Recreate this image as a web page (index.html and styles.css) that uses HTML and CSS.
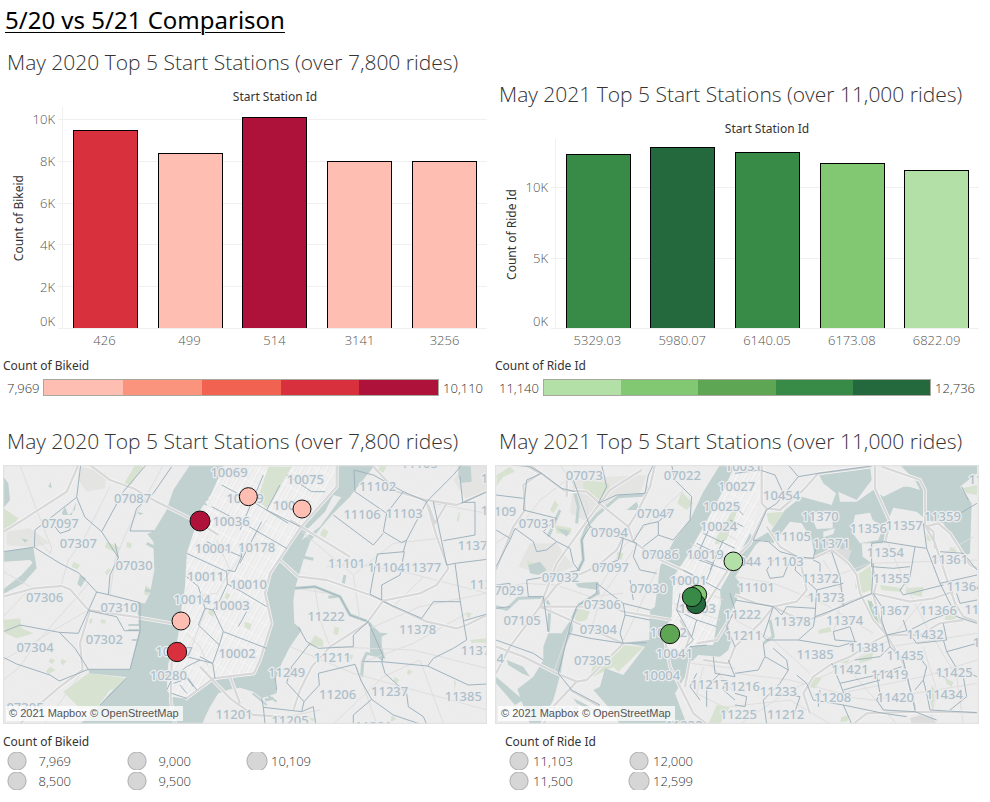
FILE: index.html
```html
<!DOCTYPE html>
<html lang="en">
<head>
<meta charset="utf-8">
<title>5/20 vs 5/21 Comparison</title>
<link rel="stylesheet" href="styles.css">
</head>
<body>
<main class="dashboard">
<h1 class="page-title">5/20 vs 5/21 Comparison</h1>

<section class="sheet sheet-bars red">
  <h2 class="sheet-title">May 2020 Top 5 Start Stations (over 7,800 rides)</h2>
  <div class="chart">
    <p class="column-title">Start Station Id</p>
    <p class="axis-title"><span>Count of Bikeid</span></p>
    <div class="scale scale-bike">
      <span class="tick">10K</span><span class="tick">8K</span><span class="tick">6K</span><span class="tick">4K</span>
      <span class="tick tick-last"><span>2K</span><span>0K</span></span>
    </div>
    <div class="plot">
      <div class="lines scale-bike"><i></i><i></i><i></i><i></i><i></i></div>
      <div class="bars bars-bike">
        <div class="slot"><div class="bar c4" style="height:89.6%"></div></div>
        <div class="slot"><div class="bar c1" style="height:79.2%"></div></div>
        <div class="slot"><div class="bar c5" style="height:95.5%"></div></div>
        <div class="slot"><div class="bar c1" style="height:75.6%"></div></div>
        <div class="slot"><div class="bar c1" style="height:75.6%"></div></div>
      </div>
    </div>
    <div class="names"><span>426</span><span>499</span><span>514</span><span>3141</span><span>3256</span></div>
  </div>
</section>

<section class="sheet sheet-bars green">
  <h2 class="sheet-title">May 2021 Top 5 Start Stations (over 11,000 rides)</h2>
  <div class="chart chart-ride">
    <p class="column-title">Start Station Id</p>
    <p class="axis-title"><span>Count of Ride Id</span></p>
    <div class="scale scale-ride">
      <span class="tick">10K</span>
      <span class="tick tick-last"><span>5K</span><span>0K</span></span>
    </div>
    <div class="plot">
      <div class="lines scale-ride"><i></i><i></i></div>
      <div class="bars bars-ride">
        <div class="slot"><div class="bar c4" style="height:92.1%"></div></div>
        <div class="slot"><div class="bar c5" style="height:95.8%"></div></div>
        <div class="slot"><div class="bar c4" style="height:93.1%"></div></div>
        <div class="slot"><div class="bar c2" style="height:87.3%"></div></div>
        <div class="slot"><div class="bar c1" style="height:83.6%"></div></div>
      </div>
    </div>
    <div class="names"><span>5329.03</span><span>5980.07</span><span>6140.05</span><span>6173.08</span><span>6822.09</span></div>
  </div>
</section>

<section class="ramp-legend red">
  <h3 class="legend-title">Count of Bikeid</h3>
  <div class="ramp"><span>7,969</span><div class="ramp-bar"><i class="c1"></i><i class="c2"></i><i class="c3"></i><i class="c4"></i><i class="c5"></i></div><span>10,110</span></div>
</section>
<section class="ramp-legend green">
  <h3 class="legend-title">Count of Ride Id</h3>
  <div class="ramp"><span>11,140</span><div class="ramp-bar"><i class="c1"></i><i class="c2"></i><i class="c3"></i><i class="c4"></i><i class="c5"></i></div><span>12,736</span></div>
</section>

<section class="sheet">
  <h2 class="sheet-title">May 2020 Top 5 Start Stations (over 7,800 rides)</h2>
  <div class="map">
  <svg viewBox="9 15 1452 777" role="img" aria-label="Map of 2020 start stations">
    <defs>
      <pattern id="grid-a" width="22" height="44" patternUnits="userSpaceOnUse" patternTransform="rotate(29)"><path d="M0 0V44M0 0H22M11 0V44" class="street"/></pattern>
      <pattern id="grid-b" width="46" height="15" patternUnits="userSpaceOnUse" patternTransform="rotate(-62)"><path d="M0 0V15M0 0H46" class="street faint"/></pattern>
      <g id="roads-a">
        <path d="M235 15L200 95L130 140L60 185L10 215M270 15L330 60L400 85L470 125L600 190L655 225M10 410L100 385L185 378L210 388L265 450L400 470L545 495M270 450L240 550L248 630L180 680L110 740L60 792M515 600L512 720L525 792M600 620L690 715L760 765L850 770M690 650L720 730"/>
        <path d="M1010 15L1010 80L900 205L810 340L795 400L815 490L780 600L762 640L640 655L555 718"/>
        <path d="M840 300L895 350L980 360L1110 405L1150 422L1180 440L1280 485L1370 505L1400 495L1461 465M1340 130L1305 190L1285 135M1278 120L1310 230L1345 325L1310 375L1260 400L1150 422L1100 490L990 560L935 620L900 690L880 750M1120 20L1190 95L1280 120L1370 135L1461 95M870 180L1050 290"/>
      </g>
    </defs>
    <rect class="land" x="9" y="15" width="1452" height="777"/>
    <rect fill="url(#grid-b)" x="9" y="15" width="1452" height="777"/>
    <path class="shade" d="M245 20L320 40L315 85L260 95L235 60ZM20 215L90 205L150 250L100 262L20 255Z"/>
    <path class="shade" d="M1395 15H1461V95L1400 120L1360 60Z"/>
    <path class="land" d="M670 15H1020L800 360L815 500L760 650L560 720L505 690L545 440L570 240Z"/>
    <path fill="url(#grid-a)" d="M670 15H1020L800 360L815 500L760 650L560 720L505 690L545 440L570 240Z"/>
    <g class="park">
      <path d="M10 145L55 175L35 205L10 208ZM10 480L60 475L65 505L100 520L50 535L15 520ZM190 695L265 640L382 655L380 680L330 690L290 745H240ZM405 15L430 20L385 85L370 75ZM320 245L358 262L350 280L315 262ZM220 305L240 315L232 328L215 320ZM325 325L333 330L320 345L315 338ZM380 245L395 250L393 265L380 262ZM437 375L450 385L445 408L432 402ZM270 475L278 478L274 492L266 488ZM303 478L317 480L316 491L302 489ZM150 595L165 600L158 612L146 606ZM185 597L200 603L190 615L182 610ZM150 620L167 630L145 642L138 634ZM680 398L692 405L682 420L675 412ZM630 445L645 455L638 470L624 460ZM590 775L620 742L610 792H590Z"/>
      <path d="M805 20L875 20L820 115L800 145L770 120L785 80ZM970 205L985 215L975 235L960 225ZM900 250L920 265L895 280ZM735 485L755 492L750 510L733 502ZM1004 500L1018 503L1014 525L1000 522ZM945 525L968 540L970 560L925 558ZM1040 582L1060 585L1055 598L1035 595ZM1185 650L1198 660L1190 670L1180 662ZM1225 628L1237 635L1227 645L1220 640ZM1140 15L1160 20L1150 38L1135 30ZM1375 160L1380 155L1376 185L1370 182ZM1400 455L1415 460L1408 475L1400 470ZM1410 540L1461 535V548H1415ZM1175 765L1190 778L1172 785ZM925 772L945 776L938 785ZM1362 660L1368 665L1364 690Z"/>
    </g>
    <g class="water">
      <path d="M570 15L520 90L500 150L462 213L442 222L460 245L463 330L450 400L435 430L410 428L418 512L408 550L390 628L265 628L268 640L384 652L330 700L300 735L240 792H605L630 740L655 700L690 688L720 683L760 695L785 715L830 700L825 660L845 610L870 560L905 510L883 490L880 425L885 385L895 350L910 300L930 245L965 200L1000 160L1050 110L1065 90L1125 15H1015L1005 80L970 130L900 210L840 300L805 360L795 420L815 485L800 540L785 600L765 640L720 648L650 655L600 690L555 716L515 710L500 690L505 610L530 550L537 510L545 440L555 380L560 280L580 220L600 150L635 100L672 15Z"/>
      <path d="M10 275L100 262L110 325L70 370L10 402V388L65 345L98 308L90 300L10 305ZM10 50L25 70L30 120L10 145ZM145 80L152 66L155 85ZM240 345L258 355L243 382L232 372ZM410 155L430 160L420 165ZM185 160L195 140L205 165L225 150L228 125L215 165L190 165ZM64 235L85 240L75 248ZM1375 15L1412 15L1415 65L1385 68L1375 50ZM1110 490L1140 518L1165 520L1145 530L1145 565L1150 605L1110 575Z"/>
      <path class="creek" d="M885 385L945 380L1020 410L1050 465L1105 485L1130 525L1150 590L1100 580L1088 605L1085 650M1015 408L985 412M1030 370L1035 345M905 290L940 298M790 700L830 690M795 720L820 715M440 250L470 265M435 390L460 395"/>
    </g>
    <path class="piers" d="M385 495H418M385 510H418M395 540H412M620 80L635 90M615 95L632 105M610 110L625 120M605 125L620 135M545 290L560 294M542 305L558 309M542 320L558 324M765 665L810 700M758 700L800 735M780 690L830 725"/>
    <path class="land" d="M1000 105L1024 112L960 200L905 240L925 205L975 155Z"/>
    <path class="minor" d="M490 15L380 215L345 300L330 405M185 370L205 300L250 240L330 80M10 470L90 385M10 335L100 385M60 15L110 150L155 265L150 280L115 240M10 660L60 620L100 560L270 365M10 600L180 500L265 450M135 790L250 630M560 520L600 560L625 620M620 440L575 560M650 240L690 330L650 400L575 410M800 180L680 350M900 210L1060 345L1080 480M980 320L1060 310L1230 340L1461 400M1060 345L1180 250L1320 235M1110 505L1260 440L1461 400M1300 130L1461 160M945 385L960 480L990 560M1180 440L1270 350M985 560L1240 570L1461 625M1080 610L1240 550L1400 460M885 385L985 400M870 560L1060 640L1461 750M1000 792L1150 650L1260 600L1330 790M1070 620L1130 792M720 765L860 770L960 750"/>
    <use href="#roads-a" class="casing"/><use href="#roads-a" class="major"/>
    <path class="zip" d="M242 15L230 112L105 210L103 262L180 310L235 338L290 396L325 404L330 345L355 293L305 215L255 172L230 112M438 15L370 95L305 215M515 20L460 100L410 145L390 213H462M325 404L420 428V515L390 628H265L178 663L150 645L50 612L10 592M290 396L265 452L235 520L178 517L60 495L10 515M265 452L350 470L373 512H418M178 517L225 565L265 628M355 293L345 250M100 262L10 275M165 200L180 220L210 210V190M382 652L300 735"/>
    <path class="zip" d="M665 75L750 120L865 190M635 140L730 190L860 265M620 245L725 290L705 335L680 330M560 280L680 335L682 372L660 420L640 450L615 445L595 380L560 350M682 372L725 395L800 440M615 445L595 495L658 555L638 610L600 590M640 450L670 515L658 555M670 515L800 565M540 545L560 590L638 610L645 655M520 670L565 655L590 690M540 675L560 700M500 690L520 650L560 620L600 600M790 45L720 210M840 75L800 150L900 200M725 290L720 255M860 45L935 95H975M785 185L720 310M715 500L740 455M515 700L560 715M550 640L580 680"/>
    <path class="zip" d="M1065 95L1062 30L1120 45L1210 95L1280 125L1220 240L1205 248L1150 215L1160 160L1065 95M1210 95L1160 160M1000 165L1120 255L1150 220M1210 275L1220 240M1110 402L1132 282L1213 275L1200 345L1145 375V420L1110 402M1280 125L1360 45L1385 15M1300 125L1340 315L1365 310L1380 420L1400 540L1360 565L1300 595L1283 618M1385 130L1461 95M1388 125L1380 50M1385 127H1425V225L1330 242M1365 310L1461 298M1150 425L1265 475L1300 425H1380M1393 482L1461 462M885 385L945 380L1020 410L1050 465L1105 485L1060 525V560L955 565L920 545L895 500M1105 485L1150 590L1145 605L1088 605M1145 605L1283 618L1405 675L1461 672M1145 605L1155 640L1220 700L1225 740L1270 770L1280 792M955 640L1065 613L1082 660L1115 718L1060 765V792M955 640L958 675L912 725L860 668L875 620L930 550M1115 718L1180 765L1260 792M912 725L905 755L790 742L785 715M905 755L940 740L947 792M790 742L795 792M830 690L825 650"/>
    <g class="zip-labels">
      <text x="398" y="115">07087</text><text x="687" y="35">10069</text><text x="735" y="115">10019</text><text x="693" y="183">10036</text><text x="180" y="188">07097</text><text x="235" y="248">07307</text><text x="640" y="265">10001</text><text x="402" y="315">07030</text><text x="617" y="348">10011</text><text x="134" y="410">07306</text><text x="576" y="416">10014</text><text x="693" y="436">10003</text><text x="357" y="440">07310</text><text x="313" y="537">07302</text><text x="105" y="560">07304</text><text x="522" y="572">10007</text><text x="711" y="580">10002</text><text x="505" y="645">10280</text><text x="75" y="740">07305</text><text x="702" y="762">11201</text>
      <text x="916" y="57">10075</text><text x="1133" y="77">11102</text><text x="1086" y="163">11106</text><text x="1212" y="158">11103</text><text x="875" y="135">10065</text><text x="770" y="262">10178</text><text x="1040" y="308">11101</text><text x="1158" y="320">11104</text><text x="1268" y="320">11377</text><text x="1429" y="255">11372</text><text x="1465" y="372">11373</text><text x="745" y="371">10010</text><text x="978" y="467">11222</text><text x="1253" y="507">11378</text><text x="997" y="592">11211</text><text x="1438" y="570">11379</text><text x="860" y="636">11249</text><text x="1013" y="702">11206</text><text x="1169" y="693">11237</text><text x="1390" y="708">11385</text><text x="870" y="779">11205</text><text x="1120" y="797">11221</text><text x="1258" y="9">11105</text><text x="1498" y="55">11370</text><text x="1498" y="150">11369</text>
    </g>
    <g class="mark red"><circle class="c1" cx="745" cy="110" r="27"/><circle class="c1" cx="906" cy="147" r="27"/><circle class="c5" cx="600" cy="183" r="30"/><circle class="c1" cx="543" cy="483" r="27"/><circle class="c4" cx="531" cy="576" r="29"/></g>
    <rect class="frame" x="11" y="17" width="1448" height="773"/>
  </svg>
  <p class="credit">© 2021 Mapbox © OpenStreetMap</p>
  </div>
</section>

<section class="sheet">
  <h2 class="sheet-title">May 2021 Top 5 Start Stations (over 11,000 rides)</h2>
  <div class="map">
  <svg viewBox="15 15 1452 777" role="img" aria-label="Map of 2021 start stations">
    <defs>
      <g id="roads-b">
        <path d="M120 15L220 90L290 95L340 140L415 200L430 245L510 300L610 345M105 15L150 40L100 75L105 150L70 200L18 330M495 15L480 80L440 160L415 200L380 270L320 320L200 375L150 440L60 560L18 640M455 30L360 90L300 170L200 310L150 440M18 560L100 590L200 640L260 665L290 660L370 580L400 550M150 440L240 480L400 550M260 665L190 740L160 792M230 60V110M150 440H280L340 430L400 455L545 480M240 690L330 740M525 540L540 620L580 700L610 760L650 792M580 580L600 530L570 480M600 600L585 680M620 550L680 540L735 450"/>
        <path d="M815 15V130L830 145L780 250L740 290L650 430M830 145L870 150L940 90L985 40L1140 20M830 200L870 260L930 295L970 295L1025 270L1075 310L1100 345L1110 400L1150 480L1190 525M930 300L950 390L920 425L850 440L800 430L735 405M850 440L810 490L735 560L715 610L640 600M850 440L940 485L1000 465L1080 425L1150 400L1260 425L1330 415L1390 395M1155 15V85L1200 185L1185 250M1175 20L1290 60L1305 90V195L1335 250L1395 430L1420 470L1461 485M1305 200L1345 190L1380 220L1440 315L1461 325M1305 195L1330 215L1335 265M1145 310L1160 370L1150 405L1170 480L1190 525L1160 540L1080 590L1020 615L970 650L940 700L960 760M1190 525L1240 610L1275 740V760M1190 525L1290 525L1350 490L1420 480M1090 792L1130 760L1275 755L1461 758"/>
      </g>
    </defs>
    <rect class="land" x="15" y="15" width="1452" height="777"/>
    <rect fill="url(#grid-b)" x="15" y="15" width="1452" height="777"/>
    <path fill="url(#grid-a)" d="M735 15H830L780 240L690 390L670 555L530 580L545 350Z"/>
    <path class="shade" d="M250 60L350 50L470 45L450 100L370 110L300 190L240 160ZM85 320L120 250L200 250L250 320L180 350Z"/>
    <g class="park">
      <path d="M60 20L75 35L40 50L20 78V45ZM280 60L355 70L360 90L325 120L280 90ZM195 195L245 205L240 225L200 220ZM180 150L195 120L205 135L190 160ZM575 95L608 130L590 150L562 130ZM735 140L750 130L710 240L675 255L680 230ZM265 445L300 455L290 480L250 490ZM370 580L400 555L460 562L385 635L370 620L330 640L300 655L310 610L350 615ZM180 670L200 680L190 705L175 695ZM680 735L720 740L690 792H655ZM110 300L130 310L115 320ZM380 275L400 280L395 300L382 295Z"/>
      <path d="M990 55L1040 70L1080 90L1060 95L1010 75ZM1160 60L1200 40L1190 80L1150 110ZM1100 345L1145 315V390L1115 400L1095 380ZM1170 375L1240 385L1230 395L1175 390ZM1250 385L1300 380L1295 410L1245 400ZM985 510L1020 500L1025 515L985 522ZM1105 595L1150 575L1145 600L1110 610ZM955 680L975 650L995 655L975 685ZM1050 600L1080 598L1070 610L1048 608ZM1310 200L1325 210L1322 245L1310 240ZM1365 450L1400 460L1395 485L1365 480ZM1365 655L1390 665L1385 680L1370 672ZM1325 675L1335 690L1328 750L1320 720ZM1415 85L1461 75V105L1430 100ZM1380 260L1400 270L1395 280L1378 272ZM830 160L880 155L850 200L835 185ZM1055 770L1080 765L1070 785L1050 785Z"/>
    </g>
    <g class="water">
      <path d="M690 15L640 95L600 180L550 245L510 320L495 440L480 450L478 540L400 548L465 560L400 645L345 625L330 680L310 690L350 735L390 792H590L570 740L555 700L585 650L600 610L625 585L690 590L715 570L725 540L710 480L740 420L760 380L735 350L800 250L780 220L735 310L690 390L693 430L680 490L670 555L640 555L600 560L560 585L528 560V500L545 470L550 350L590 290L640 200L700 90L735 15Z"/>
      <path d="M175 520L215 520L248 470V510L225 560L212 640L190 720L150 792H120L82 688L130 650L160 600L160 560ZM18 650L100 720L75 735L18 670ZM50 600L100 620L120 650L95 640L55 615ZM255 370L325 365V390L265 382ZM115 315L150 305L170 330L145 345L120 340ZM250 715L340 760L330 765L260 730ZM410 150L440 125L450 150ZM200 205L240 212L230 230Z"/>
      <path d="M1230 15H1461V40L1410 80L1435 115L1445 130L1440 280L1420 290L1390 240L1360 190L1310 180L1280 155L1210 143L1190 190L1180 250L1115 250L1118 290L1145 310L1100 335L1075 310L1025 275L975 290L965 240L935 190L900 185L850 250L815 240L790 260L735 350V310L795 240L845 210L885 150L935 110L1025 135L1038 100L1000 70L985 40L1140 15L1145 60L1100 120L1045 95L1050 125L1100 125L1150 90L1180 110L1240 80L1275 80Z"/>
      <path class="creek" d="M475 80L465 105L385 110L320 165L290 200L275 240L280 300L265 330M320 370L325 400L265 435L245 480M18 440L50 448L85 415L165 412L180 440L175 515M840 480L850 530L820 550M1140 425L1170 500M210 150L175 230M255 100L265 140L260 190"/>
      <path class="lake" d="M1132 420L1145 425L1155 465L1175 490L1170 505L1150 480Z"/>
    </g>
    <path class="land" d="M960 160L990 155L1028 165V205L980 207ZM1095 165L1140 158L1148 180L1180 200L1165 240L1110 250L1085 215ZM1000 215L1035 205L1030 222L1000 232ZM1145 15H1230L1275 60L1290 90L1240 75L1180 105L1150 90Z"/>
    <path class="shade dark" d="M975 290L1025 262L1085 270L1075 300L1095 330L1070 315L1030 280ZM1260 775L1290 765L1330 775L1340 790H1265Z"/>
    <path class="minor" d="M210 15L290 130L300 200M580 90L400 260L330 380L240 500L190 640M18 390L100 370L200 375L300 410L400 400M18 250L90 200L150 120L230 60M430 270L330 420L300 520M500 330L430 480L400 540M600 250L740 320M560 360L700 420M550 430L690 480M650 190L740 240M600 610L735 625M640 620L620 700L700 740M650 600L735 700M750 792L900 690L1020 640L1200 540L1300 420M735 350L850 370L1000 430L1150 520M735 640L900 660L1050 700L1300 650L1461 600M970 700L1150 720L1461 670M1000 360L1140 310L1461 300M1190 240L1250 380L1310 500L1400 650L1420 792M1000 300L1060 400L1030 520M735 480L850 540L960 640M1200 560L1461 520M1330 300L1450 230M720 740L900 720L1020 792M1070 620L1220 792M1300 560L1340 690L1320 792"/>
    <use href="#roads-b" class="casing"/><use href="#roads-b" class="major"/>
    <path class="zip" d="M65 15L120 20L155 40L110 60L100 150L200 175L160 215L200 245L170 270L140 275L130 245L75 205L60 240L18 320M18 105L100 115M18 210L60 235M250 60L300 200M155 40L215 85L255 95M335 15L350 80L325 130L380 105L465 100L475 45L490 15M545 15L555 60L605 110L600 180L550 240L505 225V185L545 150M300 200L275 240L280 300L265 330L250 310L240 265L200 245M110 360L200 345L270 330M110 360L115 410L160 410L175 515M320 370L400 430L480 450M320 370V400L260 440L240 500L235 520L205 640L245 690L330 735M400 430L405 465L390 520L400 550L470 548M235 520L300 535L400 550M405 465L480 480M300 200L400 235L385 300L330 320M400 235L440 250L430 290L450 330L500 340M430 245L460 195L505 185M18 375L60 370V410M160 600L130 580L18 540M60 440L18 445M420 360L430 420M505 225L460 260"/>
    <path class="zip" d="M640 220L735 265M620 250L720 300M600 290L710 330M580 330L690 390M555 355L610 380M660 200L620 290L670 310L650 360M700 240L660 330M720 180L760 200M560 450L620 480L680 500M570 400L560 450L610 540L590 560M620 480L605 530M530 500L570 510M690 640L650 680V740M620 640L600 680L630 720M670 590L675 640L735 650L715 600M700 690L735 720M600 560L650 555M720 400L735 450L710 500L735 560"/>
    <path class="zip" d="M735 40L810 30L855 45L880 100L925 120M925 50L985 40L1145 18M895 15L925 50L860 130L830 150L790 240L835 245L870 275L925 290L970 295L980 250M850 300L830 330L840 355L880 350L900 300M925 290L915 330L980 390L1060 370M970 300L990 310V335M980 390L975 470L1055 440L1145 400L1150 310M1025 275L1050 350L1060 440M1145 250L1180 245L1275 260L1260 350L1230 390L1240 405L1360 375M1145 250V320L1210 325L1260 320M1275 260L1310 265L1350 370L1400 470L1461 490M1310 265L1300 190M1350 275L1420 280L1461 330M1350 370L1461 345M735 420L850 440L875 465L890 440L975 445M850 440L820 530L830 540L925 540L970 500L975 470M925 540L1045 560L1095 545L1080 500L1030 515L1035 540L1100 545M1150 400L1175 440V480L1190 525L1200 560L1240 600L1275 750M1190 525L1260 510L1320 480L1400 450M1240 480L1250 510L1280 550L1370 540L1360 490M1095 600L1170 590L1200 560M1050 670L1160 645L1235 620M1160 645L1170 700L1160 720L1180 750L1275 755M1060 690L1170 660M1050 670L1065 710M1275 690L1300 660L1310 620L1280 580M1300 660L1310 700L1320 750M1370 575L1400 625L1461 650M1370 575L1461 550M1420 650L1430 710L1380 750M1360 540L1370 575M820 550L825 590L895 630L890 600L850 565M825 590L805 630L735 640M895 630L870 670L820 720L830 792M920 645L950 670L970 720L1060 735L1180 760L1250 770M870 700L930 710L910 770M735 700L770 710L765 740L735 735M990 690L985 740M1060 735L1085 792M1340 640L1370 655M1275 755L1340 780M1320 750L1461 758M1415 80L1435 120M1410 160L1461 130M735 140L760 165M1400 400L1410 430L1461 420M1025 610L1050 670"/>
    <g class="zip-labels">
      <text x="283" y="45">07073</text><text x="577" y="45">07022</text><text x="23" y="153">07109</text><text x="142" y="190">07031</text><text x="695" y="137">10025</text><text x="497" y="160">07047</text><text x="686" y="198">10024</text><text x="358" y="216">07094</text><text x="511" y="281">07086</text><text x="645" y="281">10019</text><text x="361" y="320">07097</text><text x="211" y="352">07032</text><text x="595" y="360">10001</text><text x="46" y="390">07029</text><text x="475" y="384">07030</text><text x="337" y="432">07306</text><text x="622" y="445">10003</text><text x="96" y="480">07105</text><text x="325" y="508">07304</text><text x="535" y="515">10282</text><text x="553" y="578">10041</text><text x="308" y="600">07305</text><text x="-14" y="595">07114</text><text x="515" y="646">10004</text><text x="657" y="672">11217</text><text x="745" y="762">11225</text><text x="210" y="752">07002</text><text x="582" y="794">11232</text><text x="740" y="77">10027</text><text x="760" y="17">10031</text>
      <text x="875" y="106">10454</text><text x="990" y="167">11370</text><text x="1357" y="168">11359</text><text x="1135" y="203">11356</text><text x="1242" y="195">11357</text><text x="907" y="228">11105</text><text x="1024" y="250">11371</text><text x="1186" y="277">11354</text><text x="757" y="304">10044</text><text x="885" y="304">11103</text><text x="1379" y="298">11361</text><text x="991" y="353">11372</text><text x="1204" y="355">11355</text><text x="798" y="380">11101</text><text x="1425" y="378">11364</text><text x="1008" y="412">11373</text><text x="757" y="461">11222</text><text x="1202" y="450">11367</text><text x="1345" y="450">11366</text><text x="1064" y="480">11374</text><text x="906" y="482">11378</text><text x="1479" y="447">11423</text><text x="1305" y="522">11432</text><text x="761" y="524">11211</text><text x="1131" y="560">11381</text><text x="975" y="583">11385</text><text x="1245" y="585">11435</text><text x="1080" y="628">11421</text><text x="1199" y="643">11419</text><text x="1392" y="635">11425</text><text x="754" y="678">11216</text><text x="865" y="693">11233</text><text x="1028" y="710">11208</text><text x="1216" y="711">11420</text><text x="1363" y="701">11434</text><text x="887" y="762">11212</text><text x="1491" y="57">11360</text><text x="1504" y="545">11412</text>
    </g>
    <g class="mark green"><circle class="c1" cx="730" cy="304" r="28"/><circle class="c2" cx="622" cy="404" r="28"/><circle class="c5" cx="618" cy="432" r="29"/><circle class="c4" cx="606" cy="411" r="29"/><circle class="c3" cx="540" cy="522" r="29"/></g>
    <rect class="frame" x="17" y="17" width="1448" height="773"/>
  </svg>
  <p class="credit">© 2021 Mapbox © OpenStreetMap</p>
  </div>
</section>

<section class="size-legend">
  <h3 class="legend-title">Count of Bikeid</h3>
  <ul class="sizes">
    <li><i class="dot"></i><span>7,969</span></li><li><i class="dot"></i><span>8,500</span></li>
    <li><i class="dot dot-mid"></i><span>9,000</span></li><li><i class="dot dot-mid"></i><span>9,500</span></li>
    <li><i class="dot dot-big"></i><span>10,109</span></li>
  </ul>
</section>
<section class="size-legend size-legend-inset">
  <h3 class="legend-title">Count of Ride Id</h3>
  <ul class="sizes">
    <li><i class="dot"></i><span>11,103</span></li><li><i class="dot"></i><span>11,500</span></li>
    <li><i class="dot dot-mid"></i><span>12,000</span></li><li><i class="dot dot-big"></i><span>12,599</span></li>
  </ul>
</section>
</main>
</body>
</html>
```
FILE: styles.css
```css
* { box-sizing: border-box; }
body { margin: 0; background: #fff; color: #333; font-family: "Noto Sans", "Open Sans", sans-serif; font-size: 12px; line-height: 16px; }
h1, h2, h3, p, ul { margin: 0; padding: 0; font-size: 12px; font-weight: 400; }
ul { list-style: none; }
i { display: block; }

.dashboard { display: grid; grid-template-columns: 1fr 1fr; column-gap: 8px; padding: 0 11px 0 3px; }
.page-title { grid-column: 1 / -1; padding-left: 2px; color: #000; font-size: 24px; line-height: 40px; text-decoration: underline; text-decoration-thickness: 1px; text-underline-offset: 3px; }
.sheet-title { padding-left: 4px; font-family: "Open Sans", "Noto Sans", sans-serif; font-weight: 300; font-size: 21px; line-height: 28px; white-space: nowrap; }
.sheet-bars { align-self: end; padding-top: 8px; }

.red { --c1: #ffbeb2; --c2: #fb947c; --c3: #f26250; --c4: #d9303e; --c5: #ae123a; }
.green { --c1: #b3e0a6; --c2: #82c873; --c3: #5ea654; --c4: #388b46; --c5: #24693d; }
.c1 { background: var(--c1); fill: var(--c1); }
.c2 { background: var(--c2); fill: var(--c2); }
.c3 { background: var(--c3); fill: var(--c3); }
.c4 { background: var(--c4); fill: var(--c4); }
.c5 { background: var(--c5); fill: var(--c5); }

.scale, .names, .ramp, .sizes { font-family: "Open Sans", "Noto Sans", sans-serif; font-size: 13px; font-weight: 300; }

/* bar charts */
.chart { display: grid; grid-template-columns: 24px 25px 1fr; grid-template-rows: 31px 222px 22px; column-gap: 3px; }
.chart-ride { grid-template-columns: 25px 25px 1fr; grid-template-rows: 31px 190px 22px; }
.column-title { grid-column: 1 / -1; padding: 13px 0 0 60px; text-align: center; }
.axis-title { display: flex; align-items: center; justify-content: center; padding-left: 8px; }
.axis-title span { writing-mode: vertical-rl; transform: rotate(180deg); white-space: nowrap; }
.scale { text-align: right; color: #555; }
.scale-bike { display: grid; grid-template-rows: repeat(5, 1fr); padding-top: 12px; }
.scale-ride { display: grid; grid-template-rows: repeat(2, 1fr); padding-top: 48px; }
.tick { margin-top: -8px; }
.tick-last { display: flex; flex-direction: column; justify-content: space-between; }
.plot { display: grid; border-bottom: 1px solid #f0f0f0; }
.lines, .bars { grid-area: 1 / 1; }
.lines i { border-top: 1px solid #f0f0f0; }
.bars { display: grid; grid-template-columns: repeat(5, 1fr); margin-left: 4px; border-left: 1px solid #f0f0f0; }
.slot { display: flex; align-items: flex-end; justify-content: center; }
.bar { width: 65px; max-width: 80%; border: 1px solid #000; border-bottom: 0; }
.names { grid-column: 3; display: grid; grid-template-columns: repeat(5, 1fr); margin-left: 4px; color: #555; text-align: center; line-height: 22px; }

/* colour ramps */
.ramp-legend { padding-top: 7px; }
.ramp { display: flex; align-items: center; gap: 4px; padding: 4px 4px 0; height: 23px; }
.ramp-bar { flex: 1; display: grid; grid-template-columns: repeat(5, 1fr); height: 17px; border: 1px solid #a8a8a0; }

/* maps */
.ramp-legend ~ .sheet { padding-top: 30px; }
.map { position: relative; margin-top: 10px; }
.map svg { display: block; width: 100%; height: auto; }
.land { fill: #ececec; }
.shade { fill: #e4e5e3; }
.shade.dark { fill: #dcdcdc; }
.park path { fill: #d8e2d0; }
.water path { fill: #c0d1d0; }
.water .creek { fill: none; stroke: #c0d1d0; stroke-width: 9; }
.water .lake { fill: #b8d2c0; }
.piers { fill: none; stroke: #c0d1d0; stroke-width: 6; }
.street { fill: none; stroke: #fafafa; stroke-width: 3; }
.street.faint { stroke: #f1f1f1; stroke-width: 2; }
.minor { fill: none; stroke: #dedede; stroke-width: 3; }
.casing { fill: none; stroke: #f8f8f8; stroke-width: 11; stroke-linejoin: round; }
.major { fill: none; stroke: #d8d8d8; stroke-width: 7; stroke-linejoin: round; }
.zip { fill: none; stroke: #a0b3be; stroke-width: 3; stroke-linejoin: round; }
.zip-labels { font-size: 39px; font-weight: 500; fill: #adbfcb; stroke: #ececec; stroke-width: 8; stroke-linejoin: round; paint-order: stroke; text-anchor: middle; dominant-baseline: central; }
.mark { stroke: #111; stroke-width: 3; }
.frame { fill: none; stroke: #e0e0e0; stroke-width: 3; }
.credit { position: absolute; left: 3px; bottom: 3px; padding: 0 4px 0 3px; background: rgba(255, 255, 255, .75); color: #555; font-family: "Liberation Sans", sans-serif; font-size: 11px; line-height: 15px; }

/* size legends */
.size-legend { padding-top: 10px; }
.size-legend-inset { padding-left: 10px; }
.sizes { display: grid; grid-auto-flow: column; grid-template-rows: 20px 20px; grid-auto-columns: 120px; padding-top: 1px; }
.sizes li { display: flex; align-items: center; height: 20px; }
.sizes span { width: 40px; text-align: right; }
.dot { width: 28px; height: 18px; background: radial-gradient(circle, #d6d6d6 8px, #b0b0b0 9px, #b0b0b0 9px, transparent 10px); }
.dot-big { background: radial-gradient(circle, #d6d6d6 9px, #b0b0b0 10px, #b0b0b0 10px, transparent 11px); }
```
